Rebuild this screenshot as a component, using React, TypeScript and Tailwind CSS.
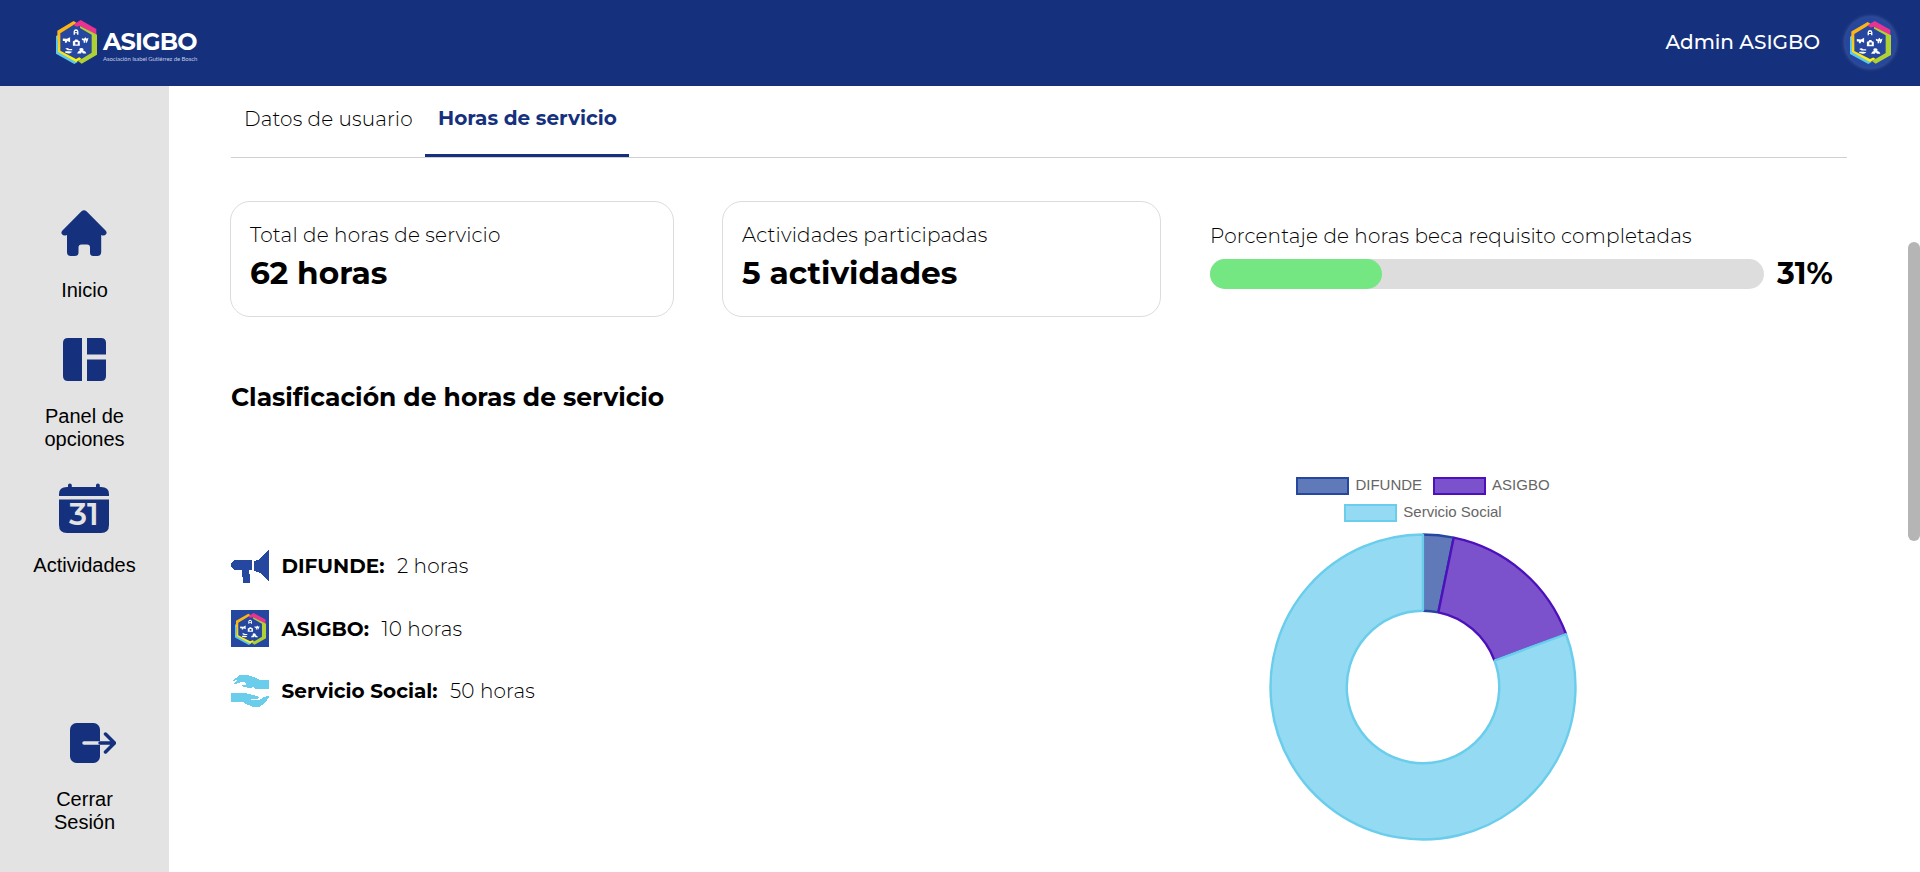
import React from "react";

const sans = "font-['Montserrat','Inter',sans-serif]";

function Emblem({ className }: { className: string }) {
  return (
    <svg viewBox="0 0 123 132" className={className} preserveAspectRatio="none">
      <defs>
        <linearGradient id="warm" x1="0" y1="0" x2="0" y2="1">
          <stop offset="0.3" stopColor="#fdb515" />
          <stop offset="0.9" stopColor="#fdee0b" />
        </linearGradient>
      </defs>
      <path d="M60 12L108 40V98L60 124L10 97V38Z" fill="#25479f" />
      <path d="M0 48L7 44V92L62 122L65 126L55 132L0 101Z" fill="#5fc8ea" />
      <path d="M53 3L62 9L13 40V92L60 117L70 112L77 117L60 126L6 95V60L4 58V32Z" fill="url(#warm)" />
      <path d="M52 14L74 0L121 27V46L72 18L62 20Z" fill="#ea3391" />
      <path d="M72 18L123 44V104L77 131L66 123L107 98V44L72 24Z" fill="#afd136" />
      <g fill="#fff" transform="translate(60 67) scale(1.04) translate(-60 -65)">
        <path d="M53 43V34Q54 27 60 27Q66 27 67 34V43H63V39H57V43ZM57 32V36H63V32Z" />
        <path d="M22 54L34 55L43 50V65L35 61L33 66H28V61H22Z" />
        <path d="M77 53L83 55L87 50L91 55L96 52L94 60L91 66H88V60H86V66H82V60L77 58Z" />
        <path d="M51 62L56 60L58 57H64L66 60L71 62V75H51ZM58 64V71H65V64Z" fillRule="evenodd" />
        <path d="M29 83Q36 79 40 84H49V88H36ZM29 91H42Q47 93 50 91Q46 98 39 97L29 95Z" />
        <path d="M63 97Q66 89 71 89Q67 82 75 81Q84 82 81 89Q88 90 90 97H80L77 93L74 97Z" />
      </g>
    </svg>
  );
}

function HomeIcon() {
  return (
    <svg viewBox="0 0 46 46" className="mr-px h-[46px] w-[46px]">
      <path
        d="M20.5 1.2Q23 -0.8 25.5 1.2L44.8 20.8Q46.3 22.5 45 24.3Q44 25.7 41.5 25.5L40.2 25V42Q40 46 36.5 46H32Q29 46 29 42.5V37.5Q29 34.5 26 34.5H20.5Q17.5 34.5 17.5 37.5V42.5Q17.5 46 14 46H9.5Q6 46 6 42V25L4.5 25.5Q2 25.7 1 24.3Q-0.3 22.5 1.2 20.8Z"
        fill="#15317e"
      />
    </svg>
  );
}

function PanelIcon() {
  return (
    <svg viewBox="0 0 43 43" className="mr-px h-[43px] w-[43px]" fill="#15317e">
      <path d="M5 0H19V43H5Q0 43 0 38V5Q0 0 5 0Z" />
      <path d="M24 0H38Q43 0 43 5V16.500H24Z" />
      <path d="M24 21.500H43V38Q43 43 38 43H24Z" />
    </svg>
  );
}

function CalendarIcon() {
  return (
    <svg viewBox="0 0 50 50" className="mr-px h-[50px] w-[50px]">
      <path
        d="M0 13V11Q0 4 8 4H9V2.200Q9 0.500 10.900 0.500T12.800 2.200V4H37V2.200Q37 0.500 38.900 0.500T40.800 2.200V4H42Q50 4 50 11V13Z"
        fill="#15317e"
      />
      <path d="M0 16.500H50V42Q50 50 42 50H8Q0 50 0 42Z" fill="#15317e" />
      <text x="25" y="42" textAnchor="middle" fontSize="31" fontWeight="600" fill="#e3e3e3" className="font-['Montserrat',sans-serif]">
        31
      </text>
    </svg>
  );
}

function LogoutIcon() {
  return (
    <svg viewBox="0 0 46 40" className="h-[40px] w-[46px]">
      <rect width="30" height="40" rx="6.500" fill="#15317e" />
      <path d="M14 20H30" stroke="#e3e3e3" strokeWidth="3.500" strokeLinecap="round" />
      <path d="M30 20H44M35.500 11L44.500 20L35.500 29" stroke="#15317e" strokeWidth="3.500" strokeLinecap="round" strokeLinejoin="round" fill="none" />
    </svg>
  );
}

function MegaphoneIcon() {
  return (
    <svg viewBox="0 0 38 34" className="h-[34px] w-[38px]" fill="#25479f" shapeRendering="crispEdges">
      <path d="M3 11.500L5 11H21V21H18L19.500 34H12.500L10.500 21H4Q0 19.500 0 16Q0 13 3 11.500Z" />
      <path d="M23 12L27 11L38 0V32L29 24L23 22Z" />
    </svg>
  );
}

function HandsIcon() {
  return (
    <svg viewBox="0 0 38 32" className="h-[32px] w-[38px]" fill="#69cdeb" shapeRendering="crispEdges">
      <path d="M0 7L8 0.500L16 0L25 3L29 5H38V14H25L22 12L19 13L12 12L11 9.500H15L14 7.500L10 7L5 9H2L7 5L6 4.500Z" />
      <path d="M0 18H14L18 19L26 21L28 23L26 24H20V25L28 25.500L33 22L38 20.500V22L34 28L29 31.500H21L15 29L11 26.500H0Z" />
    </svg>
  );
}

function NavItem({ icon, label, className }: { icon: React.ReactNode; label: string; className: string }) {
  return (
    <a className={`flex flex-col items-center text-center ${className}`}>
      {icon}
      <span className="w-[110px] text-[20px] leading-[23px] text-black">{label}</span>
    </a>
  );
}

function Row({ icon, label, value }: { icon: React.ReactNode; label: string; value: string }) {
  return (
    <li className="flex h-[38px] items-center whitespace-nowrap text-[20px] leading-6">
      <span className="w-[50.5px] shrink-0">{icon}</span>
      <span className="mr-[12.5px] font-bold">{label}</span>
      <span className="font-light tracking-[0.15px]">{value}</span>
    </li>
  );
}

function LegendItem({ box, label }: { box: string; label: string }) {
  return (
    <span className="flex items-center gap-[6px]">
      <span className={`h-[18px] w-[53px] border-[2px] ${box}`} />
      <span className="-mt-[2px]">{label}</span>
    </span>
  );
}

const slices = [
  { value: 2, fill: "#6079b9", stroke: "#25479f" },
  { value: 10, fill: "#7b52cb", stroke: "#4d10bb" },
  { value: 50, fill: "#93daf2", stroke: "#69cdeb" },
];

function Doughnut() {
  const total = slices.reduce((sum, s) => sum + s.value, 0);
  const c = 154;
  const outer = 152.5;
  const inner = 76.25;
  const point = (r: number, a: number) => `${c + r * Math.sin(a)} ${c - r * Math.cos(a)}`;
  let angle = 0;
  return (
    <svg viewBox="0 0 308 308" className="h-[308px] w-[308px]">
      {slices.map((s) => {
        const from = angle;
        const to = from + (s.value / total) * Math.PI * 2;
        angle = to;
        const large = to - from > Math.PI ? 1 : 0;
        return (
          <path
            key={s.fill}
            d={`M${point(outer, from)}A${outer} ${outer} 0 ${large} 1 ${point(outer, to)}L${point(inner, to)}A${inner} ${inner} 0 ${large} 0 ${point(inner, from)}Z`}
            fill={s.fill}
            stroke={s.stroke}
            strokeWidth="2.4"
            strokeLinejoin="bevel"
          />
        );
      })}
    </svg>
  );
}

export default function App() {
  return (
    <div className={`flex h-[872px] w-[1920px] flex-col overflow-hidden bg-white text-black ${sans}`}>
      <header className="flex h-[86px] shrink-0 items-center justify-between bg-[#15317e] pl-14 pr-6 text-white">
        <div className="mb-[2px] flex h-11 gap-[6px]">
          <Emblem className="h-[44px] w-[41px]" />
          <div className="flex flex-col whitespace-nowrap pt-[9px]">
            <span className="text-[24px] font-bold leading-[25px] tracking-[-0.85px]">ASIGBO</span>
            <span className="mt-px font-['Lato',sans-serif] text-[6px] leading-[8px] tracking-[-0.07px] text-[#c3cce4]">Asociación Isabel Gutiérrez de Bosch</span>
          </div>
        </div>
        <div className="mb-[2px] flex items-center gap-[25px]">
          <span className="text-[20px] font-medium">Admin ASIGBO</span>
          <div className="flex h-[51px] w-[51px] items-center justify-center rounded-full bg-[#25479f] shadow-[0_0_4px_rgba(255,255,255,0.3)]">
            <Emblem className="h-[43px] w-[41px]" />
          </div>
        </div>
      </header>

      <div className="flex min-h-0 flex-1">
        <nav className="flex w-[169px] shrink-0 flex-col items-center bg-[#e3e3e3] pt-[124px] font-['Liberation_Sans',sans-serif]">
          <NavItem className="gap-[23px]" icon={<HomeIcon />} label="Inicio" />
          <NavItem className="mt-[36px] gap-[24px]" icon={<PanelIcon />} label="Panel de opciones" />
          <NavItem className="mt-[32px] gap-[21px]" icon={<CalendarIcon />} label="Actividades" />
          <NavItem className="mt-[146px] w-[90px] gap-[25px]" icon={<span className="pl-4"><LogoutIcon /></span>} label="Cerrar Sesión" />
        </nav>

        <main className="flex w-[1739px] flex-col pl-[62px] pr-[73px]">
          <div className="flex h-[72px] w-[1616px] shrink-0 whitespace-nowrap border-b border-[#d0d0d0] text-[20px] leading-6">
            <span className="w-[194px] pl-[13px] pt-[21px] font-light tracking-[0.12px]">Datos de usuario</span>
            <span className="w-[204px] border-b-[3px] border-[#15317e] pl-[13px] pt-[20px] font-bold text-[#15317e]">Horas de servicio</span>
          </div>

          <section className="-ml-px mt-[43px] flex h-[116px] whitespace-nowrap">
            <div className="w-[444px] rounded-[20px] border border-[#dcdcdc] pl-[19px] pt-[21px]">
              <p className="text-[20px] font-light leading-6 tracking-[0.15px]">Total de horas de servicio</p>
              <p className="mt-[8px] text-[31.2px] font-bold leading-9">62 horas</p>
            </div>
            <div className="ml-[48px] w-[439px] rounded-[20px] border border-[#dcdcdc] pl-[19px] pt-[21px]">
              <p className="text-[20px] font-light leading-6 tracking-[0.15px]">Actividades participadas</p>
              <p className="mt-[8px] text-[31.2px] font-bold leading-9">5 actividades</p>
            </div>
            <div className="ml-[49px] pt-[23px]">
              <p className="text-[20px] font-light leading-6 tracking-[0.13px]">Porcentaje de horas beca requisito completadas</p>
              <div className="mt-[11px] flex items-center">
                <div className="h-[30px] w-[554px] rounded-full bg-[#dddddd]">
                  <div className="h-full rounded-full bg-[#74e783]" style={{ width: "31%" }} />
                </div>
                <span className="ml-[13px] text-[30px] font-bold leading-[30px]">31%</span>
              </div>
            </div>
          </section>

          <h2 className="mt-[64px] whitespace-nowrap text-[25px] font-bold leading-8">Clasificación de horas de servicio</h2>

          <section className="flex">
            <ul className="mt-[134px] flex w-[1038px] shrink-0 flex-col gap-[24.500px]">
              <Row icon={<MegaphoneIcon />} label="DIFUNDE:" value="2 horas" />
              <Row
                icon={
                  <span className="flex h-[37px] w-[38px] items-center justify-center bg-[#25479f]">
                    <Emblem className="h-[32px] w-[31px]" />
                  </span>
                }
                label="ASIGBO:"
                value="10 horas"
              />
              <Row icon={<HandsIcon />} label="Servicio Social:" value="50 horas" />
            </ul>
            <figure className="mt-[64px] flex w-[308px] flex-col items-center font-['Liberation_Sans',sans-serif] text-[15px] leading-[18px] text-[#666]">
              <figcaption className="flex flex-col items-center gap-[9px]">
                <div className="flex gap-[11px]">
                  <LegendItem box="border-[#25479f] bg-[#6079b9]" label="DIFUNDE" />
                  <LegendItem box="border-[#4d10bb] bg-[#7b52cb]" label="ASIGBO" />
                </div>
                <LegendItem box="border-[#69cdeb] bg-[#93daf2]" label="Servicio Social" />
              </figcaption>
              <div className="mt-[11px]">
                <Doughnut />
              </div>
            </figure>
          </section>
        </main>

        <div className="w-3 shrink-0 pt-[156px]">
          <div className="h-[299px] rounded-full bg-[#b5b5b5]" />
        </div>
      </div>
    </div>
  );
}
